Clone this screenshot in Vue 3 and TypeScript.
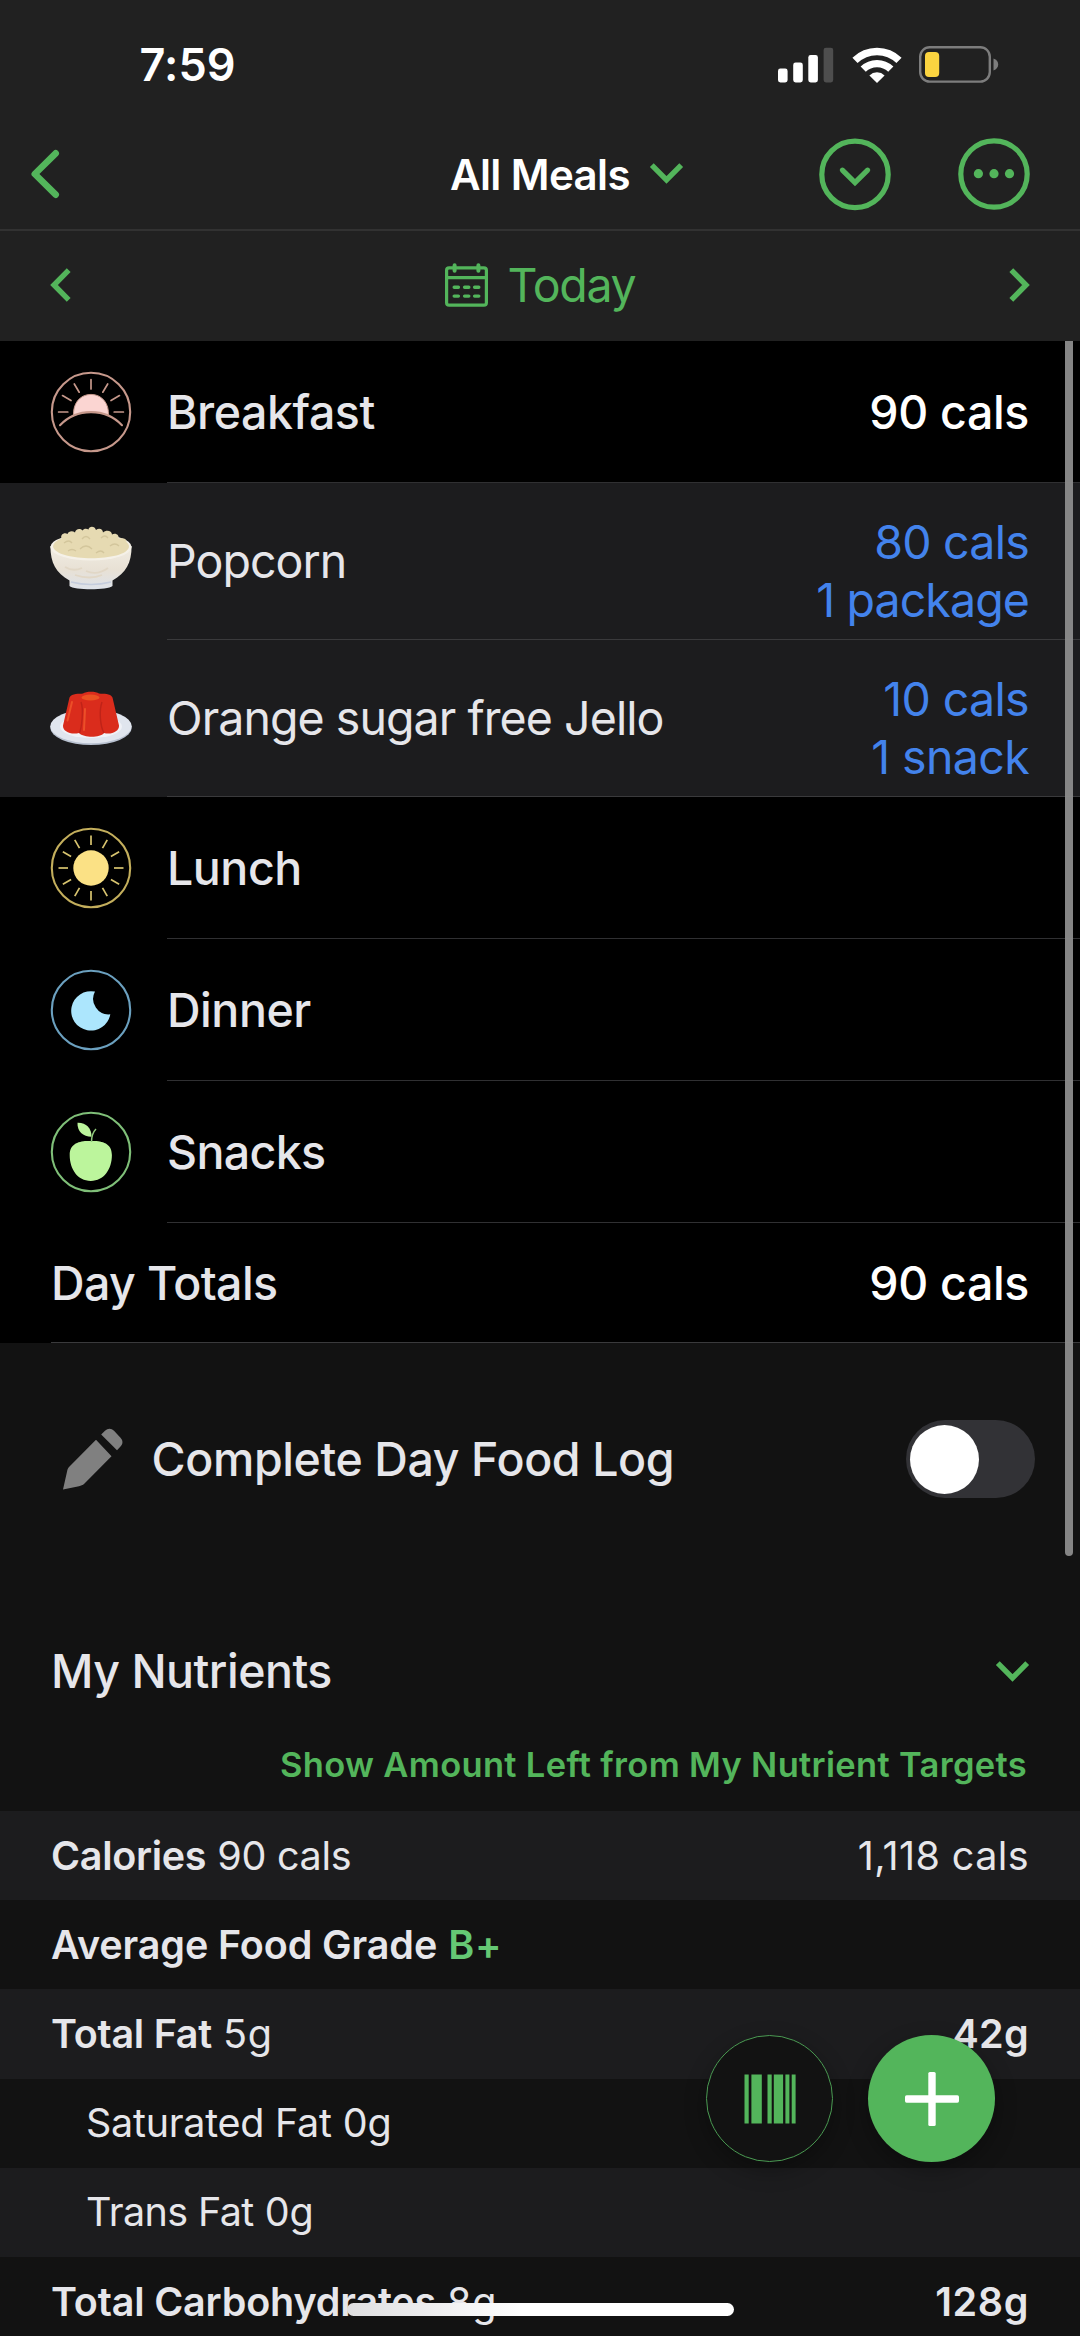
<script setup lang="ts">
interface MealRow {
  id: string
  name: string
  kind: 'meal' | 'food'
  cals?: string
  amount?: string
  tracking: number
  valueTracking?: number
  amountTracking?: number
}

interface NutrientRow {
  label: string
  value: string
  target?: string
  tracking: number
  valueTracking?: number
  targetTracking?: number
  sub?: boolean
  grade?: boolean
  lightTarget?: boolean
}

const rows: MealRow[] = [
  { id: 'breakfast', name: 'Breakfast', kind: 'meal', cals: '90 cals', tracking: -0.46, valueTracking: -0.35 },
  { id: 'popcorn', name: 'Popcorn', kind: 'food', cals: '80 cals', amount: '1 package', tracking: -0.95, valueTracking: -0.75, amountTracking: -0.9 },
  { id: 'jello', name: 'Orange sugar free Jello', kind: 'food', cals: '10 cals', amount: '1 snack', tracking: -0.93, valueTracking: -0.65, amountTracking: -0.65 },
  { id: 'lunch', name: 'Lunch', kind: 'meal', tracking: -0.45 },
  { id: 'dinner', name: 'Dinner', kind: 'meal', tracking: -0.45 },
  { id: 'snacks', name: 'Snacks', kind: 'meal', tracking: -0.65 },
]

const nutrients: NutrientRow[] = [
  { label: 'Calories', value: '90 cals', target: '1,118 cals', tracking: -0.3, valueTracking: -0.29, targetTracking: 0.4, lightTarget: true },
  { label: 'Average Food Grade', value: 'B+', tracking: -0.11, valueTracking: 0.8, grade: true },
  { label: 'Total Fat', value: '5g', target: '42g', tracking: -0.25, valueTracking: 0.7, targetTracking: 0.3 },
  { label: 'Saturated Fat', value: '0g', tracking: -0.27, valueTracking: -0.1, sub: true },
  { label: 'Trans Fat', value: '0g', tracking: -0.6, valueTracking: -0.1, sub: true },
  { label: 'Total Carbohydrates', value: '8g', target: '128g', tracking: -0.17, valueTracking: 0.7, targetTracking: 0.6 },
]

const rayAngles = Array.from({ length: 12 }, (_, i) => i * 30)
const track = (n?: number) => ({ letterSpacing: `${n ?? 0}px` })
</script>

<template>
  <main class="screen">
    <header class="top">
      <div class="status">
        <span class="time">7:59</span>
        <div class="status-icons">
          <svg class="signal" width="56" height="36" viewBox="0 0 56 36">
            <rect x="0" y="21.5" width="9.6" height="14" rx="2.4" fill="#fff" />
            <rect x="15.2" y="15.5" width="9.6" height="20" rx="2.4" fill="#fff" />
            <rect x="30.3" y="8" width="9.6" height="27.5" rx="2.4" fill="#fff" />
            <rect x="45.6" y="0.7" width="9.6" height="34.8" rx="2.4" fill="#4e4e4e" />
          </svg>
          <svg class="wifi" width="50" height="36" viewBox="0 0 50 36">
            <g fill="none" stroke="#fff" stroke-width="7.4">
              <path d="M3 13.4A31.500 31.500 0 0 1 47 13.4" />
              <path d="M11.200 22.2A19.800 19.800 0 0 1 38.800 22.2" />
            </g>
            <path d="M25 36L17.4 28.4A11 11 0 0 1 32.6 28.4Z" fill="#fff" />
          </svg>
          <svg class="battery" width="80" height="37" viewBox="0 0 80 37">
            <rect x="1.2" y="1.2" width="69.6" height="34.4" rx="9.5" fill="none" stroke="#7d7d7d" stroke-width="2.4" />
            <rect x="6" y="6" width="14.2" height="25" rx="4" fill="#fbd440" />
            <path d="M74.5 12.6C77.5 13.6 79.2 15.9 79.2 18.5C79.2 21.1 77.5 23.4 74.5 24.4Z" fill="#7d7d7d" />
          </svg>
        </div>
      </div>
      <nav class="nav">
        <svg class="back" width="28" height="50" viewBox="0 0 28 50">
          <path d="M24.7 4.3L3.8 25L24.7 45.7" class="line" stroke-width="6.6" stroke-linecap="round" stroke-linejoin="round" />
        </svg>
        <div class="title">
          <h1>All Meals</h1>
          <svg width="33" height="21" viewBox="0 0 33 21">
            <path d="M1.8 2.2L16.5 17L31.2 2.2" class="line" stroke-width="5.4" />
          </svg>
        </div>
        <div class="actions">
          <svg width="72" height="72" viewBox="0 0 72 72">
            <circle cx="36" cy="36.4" r="33.2" class="line" stroke-width="5.2" />
            <path d="M23.4 32.2L36 44.7L48.6 32.2" class="line" stroke-width="5.2" stroke-linecap="round" />
          </svg>
          <svg width="72" height="72" viewBox="0 0 72 72">
            <circle cx="36" cy="36" r="33.2" class="line" stroke-width="5.2" />
            <g fill="#53b55b">
              <circle cx="20.4" cy="35.7" r="4.6" />
              <circle cx="36" cy="35.7" r="4.6" />
              <circle cx="51.5" cy="35.7" r="4.6" />
            </g>
          </svg>
        </div>
      </nav>
      <div class="date">
        <svg width="21" height="34" viewBox="0 0 21 34">
          <path d="M18.7 2.2L4 17L18.7 31.8" class="line" stroke-width="5.4" />
        </svg>
        <div class="today">
          <svg width="43" height="44" viewBox="0 0 43 44">
            <g class="line" stroke-width="3.2">
              <rect x="1.6" y="4.8" width="39.8" height="37.4" rx="2.5" />
              <path d="M1.6 14.6H41.4" />
              <path d="M9.6 2.2V7.8M33.4 2.2V7.8" stroke-width="4" stroke-linecap="round" />
              <path d="M9.2 24.3H13.4M19.6 24.3H23.8M29.6 24.3H33.8M9.2 33.1H13.4M19.6 33.1H23.8M29.6 33.1H33.8" stroke-width="3.4" stroke-linecap="round" />
            </g>
          </svg>
          <span>Today</span>
        </div>
        <svg width="21" height="34" viewBox="0 0 21 34">
          <path d="M2.3 2.2L17 17L2.3 31.8" class="line" stroke-width="5.4" />
        </svg>
      </div>
    </header>

    <section class="list">
      <article v-for="row in rows" :key="row.id" class="row" :class="[row.kind, row.id]">
        <svg class="icon" width="82" height="82" viewBox="0 0 82 82">
          <g v-if="row.id === 'breakfast'" fill="none" stroke="#c6988b" stroke-width="2.1" stroke-linecap="round">
            <circle cx="41" cy="41" r="39.2" />
            <path d="M23.6 44.6C22.7 33 29.5 23.4 41 23.4S59.3 33 58.4 44.6C47 39.8 35 39.8 23.6 44.6Z" fill="#fbd5d2" stroke-width="1" />
            <path d="M10 54.2C26.5 36.700 55.5 36.700 72 54.2" />
            <path d="M41 8.5V18M24.3 13L29.2 21.2M57.7 13L52.8 21.2M12.5 24.6L21 29.5M69.5 24.6L61 29.5M8.6 41H17.8M64.2 41H73.4" stroke-width="1.7" />
          </g>
          <g v-else-if="row.id === 'popcorn'">
            <defs>
              <linearGradient id="bowl" x1="0" y1="0" x2="0" y2="1">
                <stop offset="0" stop-color="#f1ece2" />
                <stop offset="0.55" stop-color="#e8e1d5" />
                <stop offset="1" stop-color="#dde2ea" />
              </linearGradient>
            </defs>
            <g transform="translate(0 -1)">
              <path d="M0.4 26C0.4 43 6 53 19.5 60.5V66C24 70.3 57.5 70.3 62.5 66V60.5C76 53 81.6 43 81.6 26Z" fill="url(#bowl)" />
              <ellipse cx="41" cy="27" rx="40.6" ry="13.6" fill="#f5f1e8" />
              <path d="M3 26.5C3.5 23 7 20 11.5 18.5C10 14.5 14.5 12 17.5 14C18.5 11 22.5 10.5 25 12.5C25.5 9 30 8 32.5 10.5C34 8 37 8.5 38.5 9.5C39 5.6 45 5.6 46 10C49 7.5 53 9 53 12.5C56 9.5 62 10.5 62 14.5C66 12.5 69.5 15.5 68.5 18.5C73 17.5 77 18.5 76.5 22C78 23 79.2 25 79 27C76 42 6 42 3 26.5Z" fill="#e6dab2" />
              <path d="M14 23Q19 19 22 23M32 19Q36 14 40 19M51 18Q55 14 58 18M30 29Q36 23 42 29M46 33Q51 29 54 33M60 26Q65 22 69 26M18 31Q22 28 26 31" fill="none" stroke="#d3c69c" stroke-width="1.3" />
              <path d="M15 47Q23 52 32 48M36 51Q47 56 58 48M25 55Q40 60 52 55" fill="none" stroke="#e1d7c6" stroke-width="1.8" />
              <path d="M21 62Q41 67 61 62" fill="none" stroke="#c5cddd" stroke-width="1.3" />
            </g>
          </g>
          <g v-else-if="row.id === 'jello'">
            <ellipse cx="41" cy="49.7" rx="40.7" ry="17.4" fill="#b8c1d0" />
            <ellipse cx="41" cy="48.2" rx="40.7" ry="17" fill="#e0e5ee" />
            <ellipse cx="41" cy="48.5" rx="31" ry="11.5" fill="#f0f2f7" />
            <path d="M19.5 19.5C22 15 29 16 33 15.5C36 13 46 13 49 15.5C54 16 60 15 62.5 19.500L69 47.5C69.5 53.5 61 57 54 55C50 60 34 60 29 55C21 57 12.500 53.5 13 47.5Z" fill="#da2c1c" />
            <path d="M31 24C34 32 31.5 50 29.5 55M52 24C49 32 50 48 54 55" fill="none" stroke="#bf2318" stroke-width="1.4" />
            <ellipse cx="40.5" cy="19.5" rx="9" ry="3" fill="#ea5122" />
            <path d="M22 24L17.5 42.500M35 31L34 52" stroke="#ec4f28" stroke-width="2" stroke-linecap="round" />
          </g>
          <g v-else-if="row.id === 'lunch'">
            <circle cx="41" cy="41" r="39.2" fill="none" stroke="#c3ae5c" stroke-width="2.1" />
            <circle cx="41" cy="41" r="17.7" fill="#fbe185" />
            <path v-for="a in rayAngles" :key="a" d="M41 8.5V18" :transform="`rotate(${a} 41 41)`" stroke="#d8c46f" stroke-width="1.7" />
          </g>
          <g v-else-if="row.id === 'dinner'">
            <circle cx="41" cy="41" r="39.2" fill="none" stroke="#6ba0bf" stroke-width="2.1" />
            <path d="M45 22.6A19.7 19.7 0 1 0 60.3 45.3A15.5 15.5 0 0 1 45 22.6Z" fill="#ace6fd" />
          </g>
          <g v-else>
            <circle cx="41" cy="41" r="39.2" fill="none" stroke="#7fbf78" stroke-width="2.1" />
            <path d="M40.8 30C50 29.6 61.9 31 61.9 44C61.9 58 54 69.9 40.8 69.9S19.7 58 19.7 44C19.7 31 31.6 29.6 40.8 30Z" fill="#bcf59c" />
            <path d="M27.5 11.8C36 11.5 41.5 17 41.6 25.8C33 25.5 27 20.5 27.5 11.8Z" fill="#bcf59c" />
            <path d="M41.5 31C41.5 25 42.5 21.5 46 18" fill="none" stroke="#90c97d" stroke-width="1.5" />
          </g>
        </svg>
        <div class="body">
          <span class="name" :style="track(row.tracking)">{{ row.name }}</span>
          <div v-if="row.cals" class="value">
            <span :style="track(row.valueTracking)">{{ row.cals }}</span>
            <span v-if="row.amount" :style="track(row.amountTracking)">{{ row.amount }}</span>
          </div>
        </div>
      </article>
      <article class="row totals">
        <div class="body">
          <span class="name">Day Totals</span>
          <div class="value"><span>90 cals</span></div>
        </div>
      </article>
      <div class="scrollbar"></div>
    </section>

    <section class="complete">
      <svg width="62" height="62" viewBox="0 0 62 62">
        <path d="M34 11.7L49.5 28.3L22.5 55.6C20.5 57.5 19 57.8 17 58.2L1 61.5L5 43.8C5.5 41.5 5.7 40.4 7.5 38.6Z" fill="#808080" />
        <path d="M39.2 6.6L43 2.8C46 -0.2 49.5 0.2 52 2.8L58.5 9.8C61.3 12.8 61 16 58.5 18.6L55 22.3Z" fill="#808080" />
      </svg>
      <span class="label">Complete Day Food Log</span>
      <div class="toggle"><div class="knob"></div></div>
    </section>

    <section class="nutrients">
      <div class="head">
        <h2>My Nutrients</h2>
        <svg width="33" height="21" viewBox="0 0 33 21">
          <path d="M1.8 2.2L16.5 17L31.2 2.2" class="line" stroke-width="5.4" />
        </svg>
      </div>
      <a class="show">Show Amount Left from My Nutrient Targets</a>
      <div v-for="n in nutrients" :key="n.label" class="nutrient" :class="{ sub: n.sub, grade: n.grade }">
        <div class="pair">
          <span class="n-label" :style="track(n.tracking)">{{ n.label }}</span>
          <span class="n-value" :style="track(n.valueTracking)">{{ n.value }}</span>
        </div>
        <span v-if="n.target" class="n-target" :class="{ light: n.lightTarget }" :style="track(n.targetTracking)">{{ n.target }}</span>
      </div>
    </section>

    <div class="fabs">
      <button class="fab scan">
        <svg width="52" height="50" viewBox="0 0 52 50" fill="#53b55b">
          <rect x="0.5" y="0.5" width="4.2" height="49" />
          <rect x="7.4" y="0.5" width="10.4" height="49" />
          <rect x="23.5" y="0.5" width="4.2" height="49" />
          <rect x="29.8" y="0.5" width="9.3" height="49" />
          <rect x="41.4" y="0.5" width="4" height="49" />
          <rect x="47.7" y="0.5" width="3.9" height="49" />
        </svg>
      </button>
      <button class="fab add">
        <svg width="54" height="54" viewBox="0 0 54 54" fill="#fff">
          <rect x="0" y="23.3" width="54" height="7.4" rx="1.6" />
          <rect x="23.3" y="0" width="7.4" height="54" rx="1.6" />
        </svg>
      </button>
    </div>
    <div class="home"></div>
  </main>
</template>

<style>
body {
  background: #121212;
}
</style>

<style scoped>
.screen {
  position: relative;
  width: 1080px;
  height: 2336px;
  overflow: hidden;
  background: #121212;
  color: #e6e6ea;
  font-family: Inter, "Liberation Sans", sans-serif;
}
svg {
  display: block;
  flex: none;
  overflow: visible;
}
.line {
  fill: none;
  stroke: #53b55b;
}
h1,
h2 {
  margin: 0;
}
.top {
  background: #212121;
  height: 341px;
}
.status {
  box-sizing: border-box;
  height: 118px;
  padding: 11px 81px 0 139.5px;
  display: flex;
  align-items: center;
  justify-content: space-between;
}
.time {
  color: #fff;
  font-size: 45px;
  font-weight: 600;
  letter-spacing: 0.1px;
}
.status-icons {
  display: flex;
  align-items: center;
}
.wifi,
.battery {
  margin-left: 17.5px;
}
.nav {
  height: 111px;
  border-bottom: 2px solid #323232;
  padding: 0 50px 0 31px;
  display: flex;
  align-items: center;
}
.title {
  margin-left: 391px;
  display: flex;
  align-items: center;
  gap: 20px;
}
.title h1 {
  padding-top: 3px;
  color: #fff;
  font-size: 42px;
  line-height: 50px;
  font-weight: 600;
  letter-spacing: -0.59px;
}
.actions {
  margin-left: auto;
  display: flex;
  gap: 67px;
}
.date {
  box-sizing: border-box;
  height: 110px;
  padding: 0 50px 2px;
  display: flex;
  align-items: center;
  justify-content: space-between;
}
.today {
  display: flex;
  align-items: center;
  gap: 20px;
  color: #53b55b;
  font-size: 46.5px;
  line-height: 56px;
  letter-spacing: -1.3px;
}
.list {
  position: relative;
  font-size: 46.5px;
}
.row {
  display: flex;
  padding-left: 50px;
  background: #000;
  height: 142px;
  align-items: center;
}
.food {
  background: #1c1c1e;
  height: 157px;
}
.body {
  box-sizing: border-box;
  align-self: stretch;
  flex: 1;
  margin-left: 35px;
  padding-right: 51px;
  border-bottom: 1px solid #303032;
  display: flex;
  align-items: center;
  justify-content: space-between;
}
.food .body {
  border-bottom-color: #3a3a3c;
}
.meal .name,
.meal .value,
.totals .name,
.totals .value {
  font-weight: 500;
}
.value {
  display: flex;
  flex-direction: column;
  align-items: flex-end;
  color: #fff;
}
.food .value {
  padding-top: 21px;
  color: #4383ec;
  line-height: 57.5px;
}
.totals {
  height: 120px;
}
.totals .body {
  margin-left: 1px;
  border-bottom-color: #3a3a3c;
}
.totals .name {
  letter-spacing: -0.59px;
}
.totals .value {
  letter-spacing: -0.35px;
}
.scrollbar {
  position: absolute;
  top: 0;
  right: 7.5px;
  width: 8px;
  height: 1215px;
  border-radius: 0 0 4px 4px;
  background: rgba(140, 140, 140, 0.95);
}
.complete {
  height: 232px;
  padding: 0 45.500px 0 62px;
  display: flex;
  align-items: center;
}
.label {
  margin-left: 27.6px;
  font-size: 46.5px;
  font-weight: 500;
  letter-spacing: -0.4px;
}
.toggle {
  box-sizing: border-box;
  margin-left: auto;
  width: 129px;
  height: 78px;
  padding: 4.5px;
  border-radius: 39px;
  background: #323236;
}
.knob {
  width: 69px;
  height: 69px;
  border-radius: 50%;
  background: #fff;
}
.nutrients {
  padding-top: 48px;
  font-size: 39.5px;
}
.head {
  height: 96px;
  padding: 0 51.500px 0 51px;
  display: flex;
  align-items: center;
  justify-content: space-between;
}
.head h2 {
  font-size: 46.5px;
  font-weight: 500;
  letter-spacing: -0.5px;
}
.show {
  display: flex;
  justify-content: flex-end;
  align-items: center;
  box-sizing: border-box;
  height: 92px;
  padding: 0 53px 1px 0;
  color: #53b55b;
  font-size: 34.5px;
  font-weight: 600;
  letter-spacing: 0.32px;
}
.nutrient {
  height: 89.2px;
  padding: 0 51px;
  display: flex;
  align-items: center;
  justify-content: space-between;
}
.nutrient:nth-of-type(even) {
  background: #1c1c1e;
}
.pair {
  display: flex;
  gap: 11px;
}
.n-label,
.n-target {
  font-weight: 600;
}
.sub {
  padding-left: 86px;
}
.sub .n-label,
.n-target.light {
  font-weight: 400;
}
.grade .n-value {
  font-weight: 600;
  color: #65c874;
}
.fabs {
  position: absolute;
  left: 706px;
  top: 2035px;
  display: flex;
  gap: 35px;
}
.fab {
  box-sizing: border-box;
  width: 127px;
  height: 127px;
  padding: 0;
  border: 0;
  border-radius: 50%;
  display: flex;
  align-items: center;
  justify-content: center;
  box-shadow: 0 8px 22px rgba(0, 0, 0, 0.3);
}
.scan {
  border: 1.5px solid #4a9a52;
  background: #121212;
}
.add {
  background: #53b55b;
}
.home {
  position: absolute;
  left: 347px;
  top: 2303px;
  width: 387px;
  height: 13px;
  border-radius: 7px;
  background: linear-gradient(90deg, #dedee0, #fff 45%);
}
</style>
